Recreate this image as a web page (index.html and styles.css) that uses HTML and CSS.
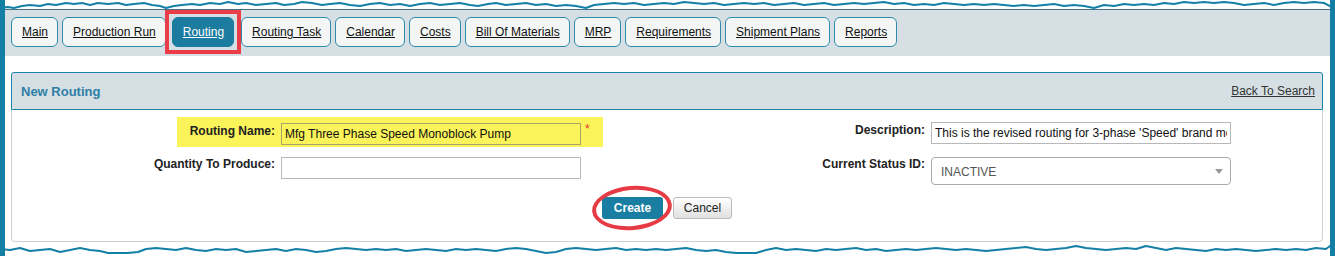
FILE: index.html
```html
<!DOCTYPE html>
<html lang="en">
<head>
<meta charset="UTF-8">
<meta name="viewport" content="width=device-width, initial-scale=1.0">
<title>New Routing</title>
<link rel="stylesheet" href="styles.css">
</head>
<body>
<div class="frame">
    <!-- torn paper edge, top -->
    <svg class="edge edge-top" width="1335" height="12" viewBox="0 0 1335 12">
        <polygon class="cut" points="0,8 8,7 14,8 22,6 30,5 40,6 48,4 56,5 66,3 74,4 82,3 90,5 98,3 108,4 118,3 126,5 134,4 144,3 152,5 160,6 166,8 174,6 182,5 192,4 200,5 210,3 220,4 228,2 238,4 246,3 256,5 266,4 276,3 284,5 294,4 302,2 312,3 322,5 330,4 340,3 350,5 360,6 370,4 380,3 390,5 400,4 410,6 420,4 430,3 440,5 450,4 460,3 470,5 478,6 488,4 496,3 506,5 516,4 526,3 536,5 546,4 556,6 566,5 576,6 586,8 594,5 604,4 614,3 624,4 634,3 644,5 654,4 664,3 674,4 684,2 694,3 704,4 714,3 724,5 734,4 744,3 754,4 764,3 774,5 784,4 794,3 804,5 814,4 824,3 834,5 844,4 854,3 864,4 874,3 884,2 894,4 904,3 914,5 924,4 934,5 944,3 954,4 964,5 974,4 984,5 994,4 1004,5 1014,6 1024,5 1034,6 1044,5 1054,4 1064,6 1074,5 1084,6 1094,8 1104,5 1114,6 1124,4 1134,5 1144,4 1154,5 1164,3 1174,4 1184,2 1194,3 1204,2 1214,3 1224,2 1234,3 1244,5 1254,4 1264,3 1274,5 1284,3 1294,2 1304,3 1314,2 1324,3 1330,6 1335,9 1335,0 0,0"/>
        <polyline class="line" points="0,8 8,7 14,8 22,6 30,5 40,6 48,4 56,5 66,3 74,4 82,3 90,5 98,3 108,4 118,3 126,5 134,4 144,3 152,5 160,6 166,8 174,6 182,5 192,4 200,5 210,3 220,4 228,2 238,4 246,3 256,5 266,4 276,3 284,5 294,4 302,2 312,3 322,5 330,4 340,3 350,5 360,6 370,4 380,3 390,5 400,4 410,6 420,4 430,3 440,5 450,4 460,3 470,5 478,6 488,4 496,3 506,5 516,4 526,3 536,5 546,4 556,6 566,5 576,6 586,8 594,5 604,4 614,3 624,4 634,3 644,5 654,4 664,3 674,4 684,2 694,3 704,4 714,3 724,5 734,4 744,3 754,4 764,3 774,5 784,4 794,3 804,5 814,4 824,3 834,5 844,4 854,3 864,4 874,3 884,2 894,4 904,3 914,5 924,4 934,5 944,3 954,4 964,5 974,4 984,5 994,4 1004,5 1014,6 1024,5 1034,6 1044,5 1054,4 1064,6 1074,5 1084,6 1094,8 1104,5 1114,6 1124,4 1134,5 1144,4 1154,5 1164,3 1174,4 1184,2 1194,3 1204,2 1214,3 1224,2 1234,3 1244,5 1254,4 1264,3 1274,5 1284,3 1294,2 1304,3 1314,2 1324,3 1330,6 1335,9"/>
    </svg>

    <ul class="tabs">
        <li><a href="#">Main</a></li>
        <li><a href="#">Production Run</a></li>
        <li class="selected"><a href="#">Routing</a></li>
        <li><a href="#">Routing Task</a></li>
        <li><a href="#">Calendar</a></li>
        <li><a href="#">Costs</a></li>
        <li><a href="#">Bill Of Materials</a></li>
        <li><a href="#">MRP</a></li>
        <li><a href="#">Requirements</a></li>
        <li><a href="#">Shipment Plans</a></li>
        <li><a href="#">Reports</a></li>
    </ul>

    <div class="panel">
        <div class="panel-head">
            <span class="panel-title">New Routing</span>
            <a href="#" class="back">Back To Search</a>
        </div>
        <div class="panel-body">
            <div class="form">
                <div class="col-left">
                    <div class="row marked">
                        <label for="routingName">Routing Name:</label>
                        <input id="routingName" class="name" type="text" value="Mfg Three Phase Speed Monoblock Pump">
                        <span class="req">*</span>
                    </div>
                    <div class="row qty">
                        <label for="quantity">Quantity To Produce:</label>
                        <input id="quantity" type="text">
                    </div>
                </div>
                <div class="col-right">
                    <div class="row desc">
                        <label for="description">Description:</label>
                        <input id="description" type="text" value="This is the revised routing for 3-phase 'Speed' brand monoblock pumps">
                    </div>
                    <div class="row status">
                        <label for="statusId">Current Status ID:</label>
                        <span class="select-wrap">
                            <select id="statusId">
                                <option>INACTIVE</option>
                                <option>ACTIVE</option>
                            </select>
                        </span>
                    </div>
                </div>
            </div>
            <div class="buttons">
                <span class="ring-wrap">
                    <button type="button" class="create">Create</button>
                    <span class="ring"></span>
                </span>
                <button type="button" class="cancel">Cancel</button>
            </div>
        </div>
    </div>

    <!-- torn paper edge, bottom -->
    <svg class="edge edge-bottom" width="1335" height="20" viewBox="0 236 1335 20">
        <polygon class="cut" points="0,249 10,250 20,248 30,251 40,250 50,249 60,252 70,250 80,248 90,250 100,251 108,253 118,253 128,253 138,252 146,249 156,248 166,249 176,250 186,248 196,250 206,251 216,249 226,250 236,249 246,252 256,251 266,250 276,249 286,251 296,249 306,250 316,252 326,251 336,249 346,248 356,249 366,250 376,249 386,250 396,249 406,251 416,250 426,249 436,250 446,251 456,249 466,250 476,249 486,250 496,251 506,249 516,248 526,249 536,251 546,253 556,252 566,249 576,248 586,249 596,250 606,249 616,248 626,250 636,249 646,250 656,249 666,250 676,249 686,248 696,250 706,251 716,250 726,252 736,253 746,253 756,253 766,250 776,248 786,250 796,249 806,250 816,251 826,249 836,250 846,249 856,248 866,250 876,249 886,251 896,250 906,249 916,250 926,249 936,248 946,249 956,250 966,249 976,250 986,251 996,250 1006,249 1016,248 1026,247 1036,249 1046,250 1056,249 1066,248 1076,246 1086,248 1096,249 1106,250 1116,249 1126,248 1136,249 1146,246 1156,248 1166,250 1176,248 1186,249 1196,250 1206,251 1216,249 1226,250 1236,249 1246,250 1256,251 1266,250 1276,249 1286,250 1296,249 1306,250 1316,248 1326,249 1330,246 1335,244 1335,256 0,256"/>
        <polyline class="line" points="0,249 10,250 20,248 30,251 40,250 50,249 60,252 70,250 80,248 90,250 100,251 108,253 118,253 128,253 138,252 146,249 156,248 166,249 176,250 186,248 196,250 206,251 216,249 226,250 236,249 246,252 256,251 266,250 276,249 286,251 296,249 306,250 316,252 326,251 336,249 346,248 356,249 366,250 376,249 386,250 396,249 406,251 416,250 426,249 436,250 446,251 456,249 466,250 476,249 486,250 496,251 506,249 516,248 526,249 536,251 546,253 556,252 566,249 576,248 586,249 596,250 606,249 616,248 626,250 636,249 646,250 656,249 666,250 676,249 686,248 696,250 706,251 716,250 726,252 736,253 746,253 756,253 766,250 776,248 786,250 796,249 806,250 816,251 826,249 836,250 846,249 856,248 866,250 876,249 886,251 896,250 906,249 916,250 926,249 936,248 946,249 956,250 966,249 976,250 986,251 996,250 1006,249 1016,248 1026,247 1036,249 1046,250 1056,249 1066,248 1076,246 1086,248 1096,249 1106,250 1116,249 1126,248 1136,249 1146,246 1156,248 1166,250 1176,248 1186,249 1196,250 1206,251 1216,249 1226,250 1236,249 1246,250 1256,251 1266,250 1276,249 1286,250 1296,249 1306,250 1316,248 1326,249 1330,246 1335,244"/>
    </svg>
</div>
</body>
</html>
```

FILE: styles.css
```css
body {
    margin: 0;
    background: #ffffff;
    font-family: "Liberation Sans", Arial, sans-serif;
    font-size: 12px;
    color: #222222;
}

.frame {
    position: relative;
    height: 256px;
    box-sizing: border-box;
    padding-top: 9px;
    border-left: 5px solid #137fa5;
    border-right: 5px solid #137fa5;
    background: #ffffff;
    overflow: hidden;
}

/* torn edges */
.edge {
    position: absolute;
    left: -5px;
    display: block;
}
.edge-top { top: 0; }
.edge-bottom { top: 236px; }
.edge .cut { fill: #ffffff; }
.edge .line {
    fill: none;
    stroke: #1580a6;
    stroke-width: 2;
    stroke-linejoin: round;
}

/* tab bar */
.tabs {
    list-style: none;
    margin: 0;
    padding: 7px 6px 9px;
    display: flex;
    gap: 4px;
    background: #d6e0e4;
    border-top: 1px solid #43718a;
}
.tabs a {
    display: block;
    padding: 7px 9px 7px 10px;
    line-height: 14px;
    border: 1px solid #2f8aac;
    border-radius: 6px;
    background: #f3f6f5;
    color: #111111;
    text-decoration: underline;
}
.tabs li.selected {
    border: 4px solid #ea3d47;
    padding: 3px;
    margin: -7px -4px -7px -5px;
}
.tabs li.selected a {
    background: #1b7ca0;
    border-color: #1b7ca0;
    color: #ffffff;
}

/* panel */
.panel {
    margin: 16px 7px 0 6px;
}
.panel-head {
    height: 36px;
    display: flex;
    align-items: center;
    justify-content: space-between;
    padding: 0 7px 0 9px;
    border: 1px solid #1b84aa;
    border-radius: 3px 3px 0 0;
    background: #d6e0e4;
}
.panel-title {
    font-size: 13px;
    font-weight: bold;
    color: #2f7ea6;
}
.back {
    color: #333333;
    text-decoration: underline;
}
.panel-body {
    height: 132px;
    padding-top: 7px;
    box-sizing: border-box;
    border: 1px solid #d0d0d0;
    border-top: none;
    border-radius: 0 0 4px 4px;
}

/* form */
.form {
    display: flex;
    height: 68px;
}
.row {
    display: flex;
    align-items: flex-start;
}
.row label {
    box-sizing: border-box;
    padding-right: 6px;
    text-align: right;
    font-weight: bold;
    line-height: 14px;
    color: #222222;
}
.row input {
    box-sizing: border-box;
    width: 300px;
    height: 22px;
    margin: 0;
    padding: 0 3px;
    border: 1px solid #b8b8b8;
    font-family: "Liberation Sans", Arial, sans-serif;
    font-size: 12px;
    color: #111111;
    background: #ffffff;
}

.col-left {
    flex: none;
    width: 592px;
}
.marked {
    margin-left: 165px;
    width: 426px;
    height: 30px;
    box-sizing: border-box;
    padding-top: 6px;
    background: #fbf35a;
}
.marked label {
    width: 104px;
    padding-top: 1px;
}
.marked input.name {
    background: #fbf35a;
    border-color: #a9a46a;
}
.req {
    margin-left: 4px;
    color: #e23333;
    line-height: 12px;
}
.qty {
    margin-top: 10px;
}
.qty label {
    width: 269px;
}

.col-right {
    flex: none;
}
.col-right label {
    width: 327px;
}
.desc {
    margin-top: 5px;
}
.desc label {
    padding-top: 1px;
}
.status {
    margin-top: 13px;
}
.select-wrap {
    position: relative;
    display: block;
}
.select-wrap select {
    appearance: none;
    box-sizing: border-box;
    width: 300px;
    height: 28px;
    margin: 0;
    padding: 2px 9px 0;
    border: 1px solid #aaaaaa;
    border-radius: 4px;
    background: #ffffff;
    font-family: "Liberation Sans", Arial, sans-serif;
    font-size: 12px;
    color: #555555;
}
.select-wrap::after {
    content: "";
    position: absolute;
    right: 8px;
    top: 12px;
    border-left: 4px solid transparent;
    border-right: 4px solid transparent;
    border-top: 5px solid #999999;
}

/* buttons */
.buttons {
    display: flex;
    justify-content: center;
    gap: 10px;
    margin-top: 12px;
}
.buttons button {
    box-sizing: border-box;
    height: 22px;
    margin: 0;
    border-radius: 3px;
    font-family: "Liberation Sans", Arial, sans-serif;
    font-size: 12px;
}
.create {
    width: 61px;
    border: none;
    background: #1a7da2;
    color: #ffffff;
    font-weight: bold;
}
.cancel {
    width: 59px;
    border: 1px solid #bbbbbb;
    background: linear-gradient(#ffffff, #e0e0e0);
    color: #222222;
}
.ring-wrap {
    position: relative;
    display: block;
}
.ring {
    position: absolute;
    left: -10px;
    top: -11px;
    width: 80px;
    height: 44px;
    box-sizing: border-box;
    border: 4px solid #e63a44;
    border-radius: 50%;
    transform: rotate(-5deg);
}
```
